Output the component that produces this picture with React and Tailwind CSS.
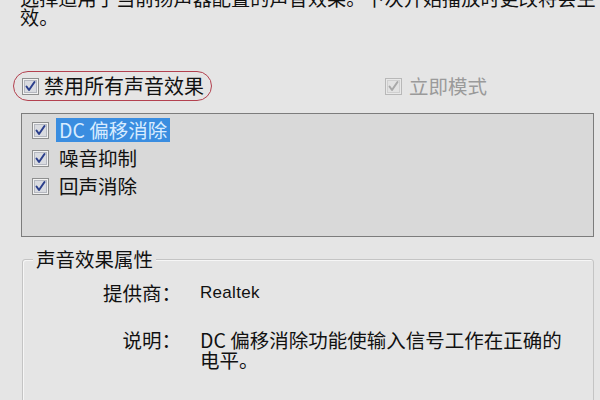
import React from 'react'

// 复选框小图标（Win7 风格）
function Check({ disabled }) {
  return (
    <svg width="17" height="17" viewBox="0 0 17 17" className="shrink-0">
      <rect x="0.5" y="0.5" width="16" height="16" fill={disabled ? '#e8e8e8' : '#f2f2f2'} stroke={disabled ? '#b8b8b8' : '#8e8f8f'} />
      <rect x="2.5" y="2.5" width="12" height="12" fill={disabled ? '#e2e2e2' : '#d9dbe0'} stroke={disabled ? '#cfcfcf' : '#b5b8c0'} />
      <path
        d="M4.5 8.5 L7 12 L12.5 4"
        fill="none"
        stroke={disabled ? '#a8a8a8' : '#2b3f8c'}
        strokeWidth="2"
        strokeLinecap="round"
        strokeLinejoin="round"
      />
    </svg>
  )
}

const effects = [
  { name: 'DC 偏移消除', selected: true },
  { name: '噪音抑制' },
  { name: '回声消除' },
]

export default function App() {
  return (
    <div className="w-[600px] h-[400px] overflow-hidden bg-[#e5e5e5] text-[#111] font-['Noto_Sans_CJK_SC','Noto_Sans',sans-serif]">
      <p className="pl-[20px] -mt-[11px] text-[19.2px] leading-[19px]">
        选择适用于当前扬声器配置的声音效果。下次开始播放时更改将会生效。
      </p>

      <div className="flex items-center mt-[44px] h-[30px]">
        <div className="ml-[13px] w-[199px] h-[30px] rounded-full border border-[#b3414f] flex items-center pl-[8px] gap-[5px]">
          <Check />
          <span className="text-[20px] leading-[24px]">禁用所有声音效果</span>
        </div>
        <div className="ml-[173px] flex items-center gap-[7px] text-[#9a9a9a]">
          <Check disabled />
          <span className="text-[19.5px] leading-[24px]">立即模式</span>
        </div>
      </div>

      <div className="ml-[21px] mt-[12px] w-[573px] h-[124px] border border-[#7c7c7c] bg-[#d9d9d9] pt-[2px] pl-[10px]">
        {effects.map(e => (
          <div key={e.name} className="flex items-center h-[28px] gap-[7px]">
            <Check />
            <span
              className={
                e.selected
                  ? 'bg-[#3a8de0] text-[#d8ecff] px-[3px] h-[24px] flex items-center text-[19.5px] leading-[24px]'
                  : 'px-[3px] text-[19.5px] leading-[24px]'
              }
            >
              {e.name}
            </span>
          </div>
        ))}
      </div>

      <div className="ml-[22px] mt-[22px] w-[572px] h-[200px] border border-[#c4c4c4] rounded-[3px] shadow-[inset_1px_1px_0_#f6f6f6]">
        <div className="-mt-[13px] ml-[10px] px-[3px] w-fit bg-[#e5e5e5] text-[19.5px] leading-[24px]">声音效果属性</div>
        <div className="grid grid-cols-[158px_1fr] gap-x-[19px] mt-[12px] text-[19.5px] leading-[20px]">
          <div className="text-right">提供商：</div>
          <div className="font-['Liberation_Sans',sans-serif] text-[17px] tracking-[0.3px]">Realtek</div>
          <div className="text-right mt-[27px]">说明：</div>
          <div className="mt-[27px] pr-[30px]">DC 偏移消除功能使输入信号工作在正确的电平。</div>
        </div>
      </div>
    </div>
  )
}
